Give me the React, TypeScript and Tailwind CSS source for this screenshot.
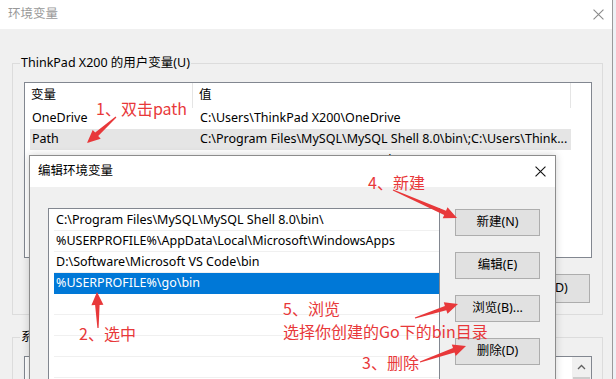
import React from "react";

type Pt = [number, number];

function arrowPoints(tail: Pt, tip: Pt, headLen = 13, headW = 12, shaftW = 4.5): string {
  const dx = tip[0] - tail[0];
  const dy = tip[1] - tail[1];
  const len = Math.hypot(dx, dy);
  const ux = dx / len;
  const uy = dy / len;
  const nx = -uy;
  const ny = ux;
  const bx = tip[0] - ux * headLen;
  const by = tip[1] - uy * headLen;
  const pts: Pt[] = [
    [tail[0] + nx * 0.6, tail[1] + ny * 0.6],
    [bx + nx * (shaftW / 2), by + ny * (shaftW / 2)],
    [bx + nx * (headW / 2), by + ny * (headW / 2)],
    [tip[0], tip[1]],
    [bx - nx * (headW / 2), by - ny * (headW / 2)],
    [bx - nx * (shaftW / 2), by - ny * (shaftW / 2)],
    [tail[0] - nx * 0.6, tail[1] - ny * 0.6],
  ];
  return pts.map((p) => `${p[0].toFixed(1)},${p[1].toFixed(1)}`).join(" ");
}

const arrows: [Pt, Pt][] = [
  [[116, 117], [87, 143]],
  [[98, 328], [97, 292]],
  [[393, 190], [457, 218]],
  [[415, 318], [458, 304]],
  [[420, 362], [466, 346]],
];

function CloseX({ color, size = 11 }: { color: string; size?: number }) {
  return (
    <svg width={size} height={size} viewBox="0 0 10 10">
      <path d="M0.5 0.5 L9.5 9.5 M9.5 0.5 L0.5 9.5" stroke={color} strokeWidth="1" fill="none" />
    </svg>
  );
}

function WinButton({ label }: { label: string }) {
  return (
    <div className="w-[85px] h-[27px] bg-[#e1e1e1] border border-[#adadad] flex items-center justify-center text-[12.5px] text-black">
      {label}
    </div>
  );
}

const dialogRows = [
  "C:\\Program Files\\MySQL\\MySQL Shell 8.0\\bin\\",
  "%USERPROFILE%\\AppData\\Local\\Microsoft\\WindowsApps",
  "D:\\Software\\Microsoft VS Code\\bin",
  "%USERPROFILE%\\go\\bin",
];

export default function App() {
  return (
    <div className="relative w-[616px] h-[379px] overflow-hidden bg-[#f0f0f0] font-['Segoe_UI','Noto_Sans','Noto_Sans_CJK_SC',sans-serif] text-[12.5px] text-black">
      <div className="flex h-full">
        {/* Outer window */}
        <div className="w-[613px] h-full flex flex-col border-r border-[#9a9a9a]">
          {/* title bar */}
          <div className="h-[29px] bg-white flex items-center justify-between pl-[8px] pr-[8px] shrink-0">
            <span className="text-[#999999] text-[12.5px]">环境变量</span>
            <CloseX color="#8a8a8a" />
          </div>
          {/* body */}
          <div className="pl-[12px] pt-[34px] flex flex-col">
            {/* group 1 */}
            <div className="relative w-[591px] h-[252px] border border-[#dcdcdc] pl-[11px] pt-[18px]">
              <span className="absolute left-[7px] top-[-9px] bg-[#f0f0f0] px-[1px] leading-[16px]">
                ThinkPad X200 的用户变量(U)
              </span>
              <div className="w-[568px] h-[176px] border border-[#828790] bg-white overflow-hidden">
                {/* header */}
                <div className="flex h-[25px] items-center pl-[6px]">
                  <div className="w-[162px] h-full flex items-center border-r border-[#e5e5e5]">变量</div>
                  <div className="w-[378px] h-full flex items-center pl-[6px] border-r border-[#e5e5e5]">值</div>
                </div>
                <div className="pl-[5px]">
                  <div className="flex h-[21px] items-center">
                    <div className="w-[163px] pl-[2px]">OneDrive</div>
                    <div className="pl-[7px]">C:\Users\ThinkPad X200\OneDrive</div>
                  </div>
                  <div className="flex h-[21px] items-center bg-[#e5e5e5] w-[541px]">
                    <div className="w-[163px] pl-[2px]">Path</div>
                    <div className="pl-[7px] whitespace-nowrap">
                      C:\Program Files\MySQL\MySQL Shell 8.0\bin\;C:\Users\Think...
                    </div>
                  </div>
                  <div className="flex h-[21px] items-center">
                    <div className="w-[163px] pl-[2px]">TEMP</div>
                    <div className="pl-[7px] whitespace-nowrap">%USERPROFILE%\AppData\Local\Temp</div>
                  </div>
                </div>
              </div>
              <div className="flex justify-end gap-[10px] mt-[16px] w-[566px]">
                <div className="w-[82px] h-[29px] bg-[#e1e1e1] border border-[#adadad] flex items-center justify-center">
                  新建(W)...
                </div>
                <div className="w-[82px] h-[29px] bg-[#e1e1e1] border border-[#adadad] flex items-center justify-center">
                  编辑(I)...
                </div>
                <div className="w-[82px] h-[29px] bg-[#e1e1e1] border border-[#adadad] flex items-center justify-center pr-[4px]">
                  删除(D)
                </div>
              </div>
            </div>
            {/* group 2 */}
            <div className="relative w-[591px] h-[120px] border border-[#dcdcdc] pl-[11px] pt-[18px] mt-[22px]">
              <span className="absolute left-[7px] top-[-9px] bg-[#f0f0f0] px-[1px] leading-[16px]">系统变量(S)</span>
              <div className="w-[568px] h-[100px] border border-[#828790] bg-white flex justify-end">
                <div className="w-[19px] h-full bg-[#f0f0f0] flex flex-col items-center">
                  <div className="h-[20px] flex items-center justify-center">
                    <svg width="9" height="6" viewBox="0 0 9 6">
                      <path d="M1 5 L4.5 1.5 L8 5" stroke="#606060" strokeWidth="1.3" fill="none" />
                    </svg>
                  </div>
                  <div className="w-[17px] h-[40px] bg-[#cdcdcd]" />
                </div>
              </div>
            </div>
          </div>
        </div>
        <div className="w-[3px] h-full bg-[#eef1f5]" />
      </div>

      {/* Edit dialog (overlay) */}
      <div className="absolute left-[29px] top-[155px] w-[527px] h-[240px] border border-[#8c8c8c] bg-[#f0f0f0] shadow-[0_0_8px_rgba(0,0,0,0.18)] flex flex-col">
        <div className="h-[31px] bg-white flex items-center justify-between pl-[8px] pr-[9px] shrink-0">
          <span>编辑环境变量</span>
          <CloseX color="#111111" />
        </div>
        <div className="flex pl-[18px] pt-[21px]">
          <div className="w-[392px] h-[200px] border border-[#828790] bg-white pl-[5px] pt-[1px] overflow-hidden">
            {dialogRows.map((r, i) => (
              <div
                key={i}
                className={
                  i === 3
                    ? "h-[21px] flex items-center pl-[2px] bg-[#0078d7] text-white border-b border-[#0078d7] whitespace-nowrap"
                    : "h-[21px] flex items-center pl-[2px] border-b border-[#f0f0f0] whitespace-nowrap"
                }
              >
                {r}
              </div>
            ))}
            {[0, 1, 2, 3, 4].map((i) => (
              <div key={"e" + i} className="h-[21px] border-b border-[#f0f0f0]" />
            ))}
          </div>
          <div className="flex flex-col gap-[16px] ml-[15px] pt-[1px]">
            <WinButton label="新建(N)" />
            <WinButton label="编辑(E)" />
            <WinButton label="浏览(B)..." />
            <WinButton label="删除(D)" />
          </div>
        </div>
      </div>

      {/* Annotations */}
      <div className="absolute inset-0 pointer-events-none font-['Microsoft_YaHei','Noto_Sans_CJK_SC',sans-serif] text-[16px] text-[#e8383a] leading-[20px]">
        <span className="absolute left-[96px] top-[98px] whitespace-nowrap">1、双击path</span>
        <span className="absolute left-[79px] top-[323px] whitespace-nowrap">2、选中</span>
        <span className="absolute left-[368px] top-[172px] whitespace-nowrap">4、新建</span>
        <span className="absolute left-[283px] top-[298px] whitespace-nowrap">5、浏览</span>
        <span className="absolute left-[283px] top-[321px] whitespace-nowrap">选择你创建的Go下的bin目录</span>
        <span className="absolute left-[362px] top-[352px] whitespace-nowrap">3、删除</span>
        <svg className="absolute left-0 top-0" width="616" height="379">
          {arrows.map((a, i) => (
            <polygon key={i} points={arrowPoints(a[0], a[1])} fill="#e8383a" />
          ))}
        </svg>
      </div>
    </div>
  );
}
